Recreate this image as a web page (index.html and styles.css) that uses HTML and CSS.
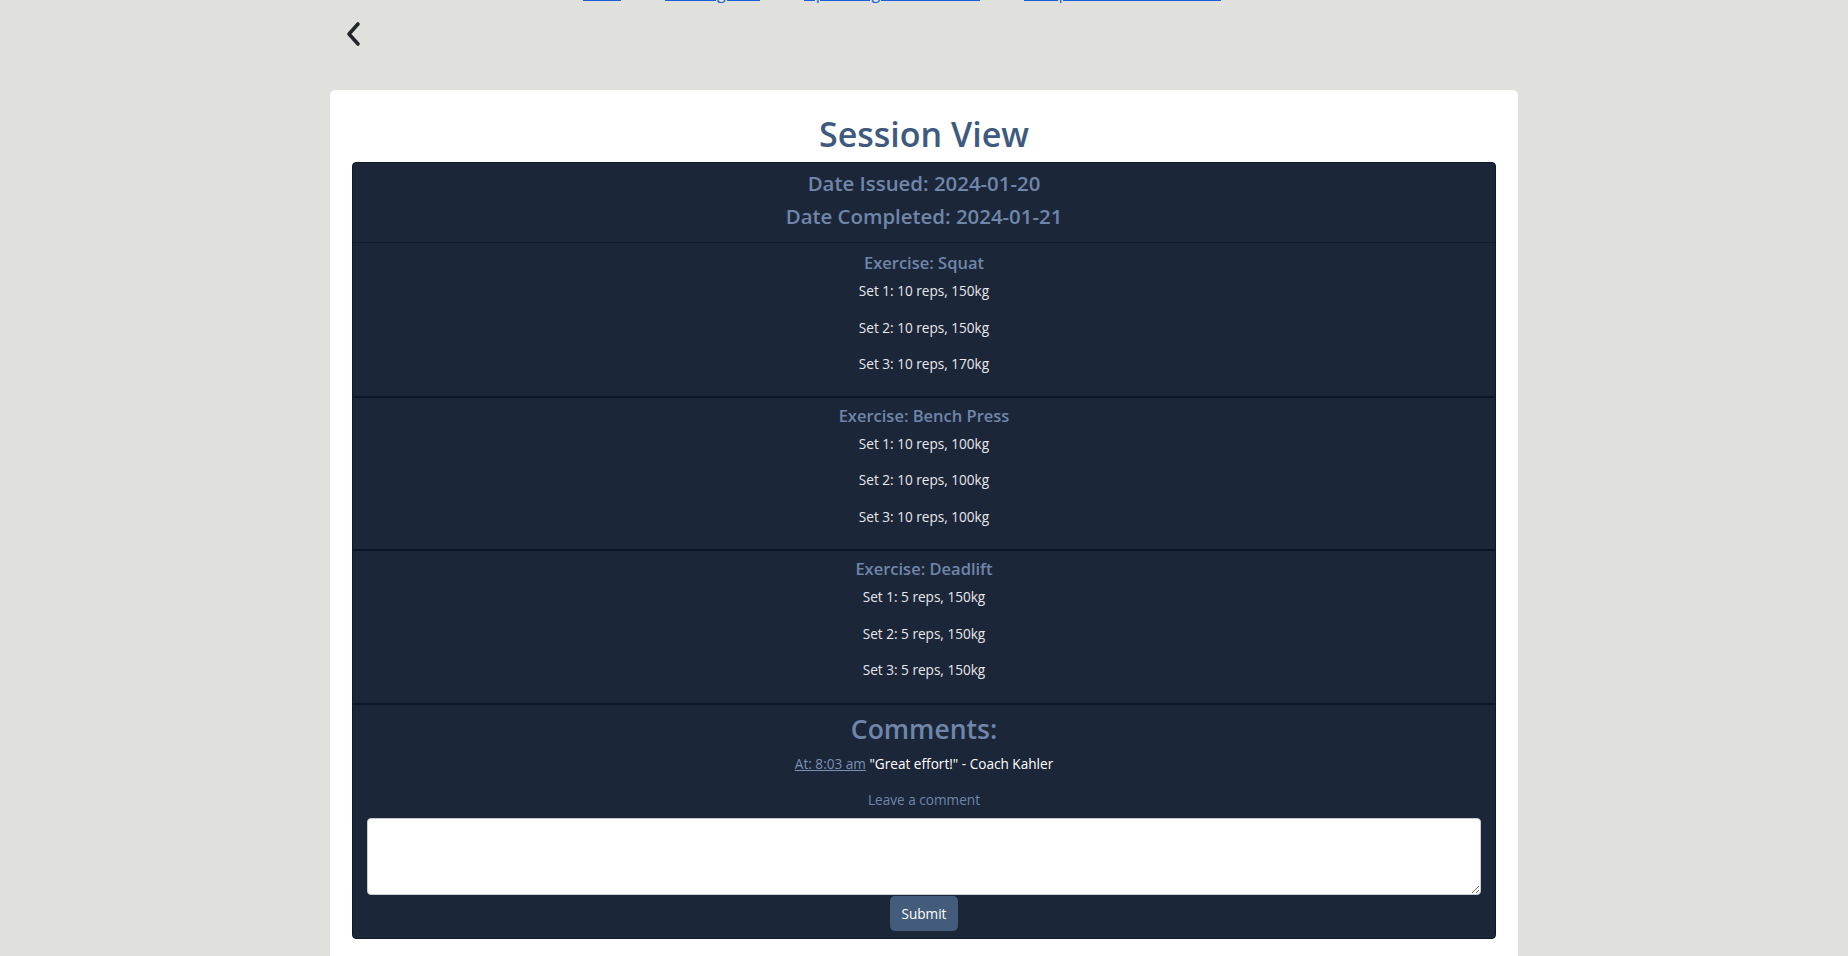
FILE: index.html
```html
<!DOCTYPE html>
<html lang="en">
<head>
<meta charset="utf-8">
<title>Session View</title>
<link rel="stylesheet" href="styles.css">
</head>
<body>
<div class="page">
  <nav class="topnav">
    <a href="#" class="l1">Home</a>
    <a href="#" class="l2">Training Dashboard</a>
    <a href="#" class="l3">Upcoming Sessions Overview</a>
    <a href="#" class="l4">Completed Sessions History Log</a>
  </nav>
  <div class="backrow">
    <button class="back" aria-label="Back">
      <svg width="18" height="26" viewBox="0 0 18 26"><path d="M14 3 L5 13 L14 23" fill="none" stroke="#22252a" stroke-width="3.6" stroke-linecap="round" stroke-linejoin="round"/></svg>
    </button>
  </div>
  <main class="card">
    <h1 class="title">Session View</h1>
    <div class="panel">
      <section class="dates">
        <p>Date Issued: 2024-01-20</p>
        <p>Date Completed: 2024-01-21</p>
      </section>
      <section class="exercise">
        <h3>Exercise: Squat</h3>
        <p>Set 1: 10 reps, 150kg</p>
        <p>Set 2: 10 reps, 150kg</p>
        <p>Set 3: 10 reps, 170kg</p>
      </section>
      <section class="exercise">
        <h3>Exercise: Bench Press</h3>
        <p>Set 1: 10 reps, 100kg</p>
        <p>Set 2: 10 reps, 100kg</p>
        <p>Set 3: 10 reps, 100kg</p>
      </section>
      <section class="exercise">
        <h3>Exercise: Deadlift</h3>
        <p>Set 1: 5 reps, 150kg</p>
        <p>Set 2: 5 reps, 150kg</p>
        <p>Set 3: 5 reps, 150kg</p>
      </section>
      <section class="comments">
        <h2>Comments:</h2>
        <p class="comment"><a href="#">At: 8:03 am</a> "Great effort!" - Coach Kahler</p>
        <label for="c" class="leave">Leave a comment</label>
        <textarea id="c"></textarea>
        <button class="submit">Submit</button>
      </section>
    </div>
  </main>
</div>
</body>
</html>
```
FILE: styles.css
```css
* { box-sizing: border-box; }
html, body { margin: 0; padding: 0; }
body {
  background: #e0e0dc;
  font-family: "Open Sans", "Noto Sans", sans-serif;
  height: 956px;
  overflow: hidden;
}
.page {
  width: 1188px;
  margin: 0 auto;
}
.topnav {
  display: flex;
  gap: 44px;
  padding-left: 253px;
  height: 3px;
  align-items: flex-end;
}
.topnav a {
  display: block;
  color: #1a5fd6;
  font-size: 16px;
  line-height: 20px;
  margin-top: -22px;
  text-decoration: underline;
  white-space: nowrap;
  overflow: hidden;
}
.topnav .l1 { width: 38px; }
.topnav .l2 { width: 95px; }
.topnav .l3 { width: 176px; }
.topnav .l4 { width: 197px; }
.backrow {
  height: 87px;
  padding-top: 18px;
  padding-left: 14px;
}
.back {
  border: 0;
  background: none;
  padding: 0;
  width: 18px;
  height: 26px;
  cursor: pointer;
}
.card {
  background: #fff;
  border-radius: 5px;
  padding: 22px 22px 40px;
  min-height: 900px;
}
.title {
  margin: 0 0 6px;
  text-align: center;
  font-size: 34px;
  line-height: 44px;
  font-weight: 600;
  color: #3e5a7e;
}
.panel {
  background: #1c2639;
  border: 1px solid #0f1828;
  border-radius: 4px;
  text-align: center;
}
.dates {
  padding: 6px 0 12px;
}
.dates p {
  margin: 0;
  font-size: 20.4px;
  line-height: 28px;
  font-weight: 600;
  color: #6f86aa;
}
.dates p + p { margin-top: 5px; }
.exercise {
  border-top: 1px solid #131b2b;
  padding: 9px 0 5px;
}
.exercise + .exercise {
  border-top: 2px solid #0d1627;
  padding: 7px 0 6px;
}
.comments { border-top: 2px solid #0d1627; }
.exercise h3 {
  margin: 0 0 7px;
  font-size: 16.5px;
  line-height: 22px;
  font-weight: 600;
  color: #6f86aa;
}
.exercise p {
  margin: 0 0 16px;
  font-size: 13.6px;
  line-height: 20.5px;
  color: #e8e8ea;
}
.comments {
  padding: 7px 14px 7px;
  display: flex;
  flex-direction: column;
  align-items: center;
}
.comments h2 {
  margin: 0;
  font-size: 26.5px;
  line-height: 34px;
  font-weight: 600;
  color: #6f86aa;
}
.comment {
  margin: 7px 0 0;
  font-size: 13.6px;
  line-height: 21px;
  color: #fff;
}
.comment a { color: #7b90b3; }
.leave {
  margin-top: 16px;
  font-size: 13.6px;
  line-height: 20px;
  color: #6f86aa;
}
textarea {
  margin-top: 8px;
  width: 100%;
  height: 77px;
  border: 1px solid #c8ccd2;
  border-radius: 4px;
  background: #fff;
  resize: vertical;
  display: block;
}
.submit {
  margin-top: 1px;
  width: 68px;
  height: 35px;
  border: 0;
  border-radius: 5px;
  background: #445c7c;
  color: #fff;
  font-family: inherit;
  font-size: 13.6px;
}
```
